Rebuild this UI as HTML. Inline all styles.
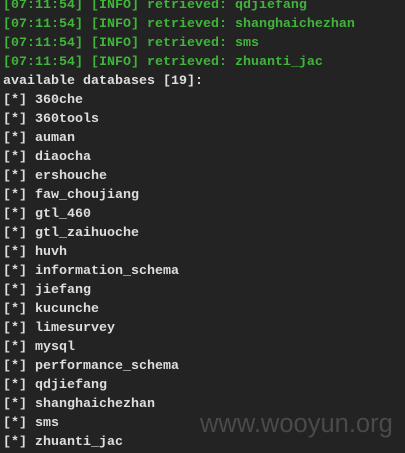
<!DOCTYPE html>
<html><head><style>
html,body{margin:0;padding:0;background:#232323;width:405px;height:453px;overflow:hidden}
pre{position:absolute;left:3px;top:-4px;margin:0;font-family:"Liberation Mono",monospace;font-size:13.33px;line-height:19px;color:#dedede;font-weight:bold}
.g{color:#3fb53a}
.w{position:absolute;left:200px;top:410px;font-family:"Liberation Sans",sans-serif;font-size:25.5px;color:#4a4a4a}
</style></head><body>
<pre><span class="g">[07:11:54] [INFO] retrieved: qdjiefang
[07:11:54] [INFO] retrieved: shanghaichezhan
[07:11:54] [INFO] retrieved: sms
[07:11:54] [INFO] retrieved: zhuanti_jac</span>
available databases [19]:
[*] 360che
[*] 360tools
[*] auman
[*] diaocha
[*] ershouche
[*] faw_choujiang
[*] gtl_460
[*] gtl_zaihuoche
[*] huvh
[*] information_schema
[*] jiefang
[*] kucunche
[*] limesurvey
[*] mysql
[*] performance_schema
[*] qdjiefang
[*] shanghaichezhan
[*] sms
[*] zhuanti_jac</pre>
<div class="w">www.wooyun.org</div>
</body></html>
